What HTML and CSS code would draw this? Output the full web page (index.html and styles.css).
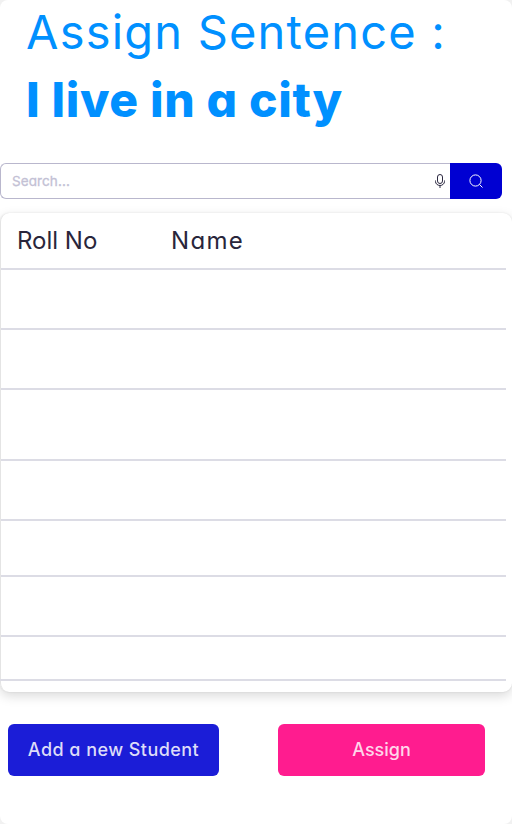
FILE: index.html
```html
<!DOCTYPE html>
<html lang="en">
<head>
<meta charset="utf-8">
<title>Assign Sentence</title>
<link rel="stylesheet" href="styles.css">
</head>
<body>
<main class="page">
  <h1 class="title"><span class="label">Assign Sentence :</span><span class="sentence">I live in a city</span></h1>
  <div class="search">
    <div class="field">
      <span class="placeholder">Search...</span>
      <svg class="mic" width="12" height="16" viewBox="0 0 12 16" fill="none" stroke="#2b2840"><rect x="3.5" y="1.5" width="5" height="9" rx="2.5"/><path d="M1.5 7.5v1a4.5 4 0 0 0 9 0v-1M6 12.5V15"/></svg>
    </div>
    <div class="go"><svg width="16" height="16" viewBox="0 0 16 16" fill="none" stroke="#fff"><circle cx="7.5" cy="7.5" r="5.6"/><path d="M11.5 11.5 14.5 14.5"/></svg></div>
  </div>
  <section class="card">
    <div class="row head"><span class="roll">Roll No</span><span class="name">Name</span></div>
    <div class="row"></div>
    <div class="row"></div>
    <div class="row tall"></div>
    <div class="row"></div>
    <div class="row short"></div>
    <div class="row"></div>
    <div class="row last"></div>
  </section>
  <div class="actions">
    <div class="button add"><span>Add a new Student</span></div>
    <div class="button assign"><span>Assign</span></div>
  </div>
</main>
</body>
</html>
```

FILE: styles.css
```css
* { box-sizing: border-box; }
body { margin: 0; background: #f1f1f1; font-family: Inter, "Liberation Sans", sans-serif; font-feature-settings: "cv11"; }
.page { height: 824px; background: #fff; border-radius: 8px; overflow: hidden; }
.title { margin: 0; padding: 0 0 0 26px; height: 163px; color: #0090ff; white-space: nowrap; }
.title span { display: block; height: 68px; line-height: 64px; }
.label { font-size: 47px; font-weight: 400; letter-spacing: 1.2px; }
.sentence { font-size: 48px; font-weight: 800; letter-spacing: 0.65px; }
.search { display: flex; width: 502px; height: 36px; }
.field { width: 450px; display: flex; align-items: center; justify-content: space-between; padding: 0 4px 0 11px; border: 1px solid #b9b7cd; border-right: 0; border-radius: 6px 0 0 6px; }
.placeholder { font-size: 13.5px; letter-spacing: 0.1px; color: #c3c1d5; -webkit-text-stroke: 0.3px #c3c1d5; }
.go { width: 52px; background: #0000d2; border-radius: 0 6px 6px 0; display: flex; align-items: center; justify-content: center; }
.card { margin: 14px 0 0; height: 479px; border-left: 1px solid #e4e4e4; border-radius: 9px; padding-right: 6px; box-shadow: 0 4px 12px rgba(0,0,0,.15), 0 0 2px rgba(0,0,0,.1); }
.row { height: 60px; border-bottom: 2px solid #dcdce5; }
.head { height: 57px; display: flex; padding-left: 16px; font-size: 24px; line-height: 56px; color: #29263b; font-weight: 400; }
.roll { width: 154px; letter-spacing: 0; }
.name { letter-spacing: 1.3px; }
.tall { height: 71px; }
.short { height: 56px; }
.last { height: 44px; margin-left: -1px; }
.actions { display: flex; gap: 59px; padding: 32px 0 0 8px; }
.button { height: 52px; padding-bottom: 2px; border-radius: 6px; display: flex; align-items: center; justify-content: center; font-size: 18px; font-weight: 500; }
.add { width: 211px; background: #1b1dd7; color: #dddcf8; letter-spacing: 0.45px; }
.assign { width: 207px; background: #ff1c8f; color: #ffd6ea; }
```
